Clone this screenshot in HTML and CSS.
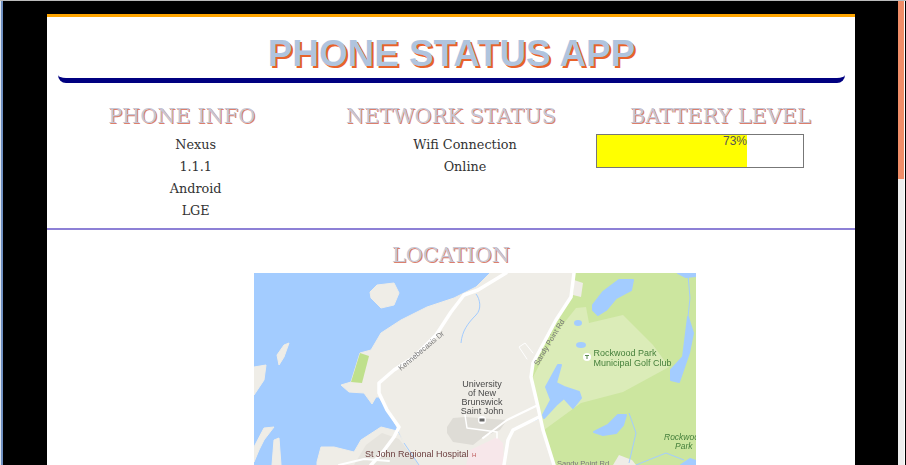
FILE: index.html
```html
<!DOCTYPE html>
<html lang="en">
<head>
<meta charset="utf-8">
<title>Phone Status App</title>
<link rel="stylesheet" href="styles.css">
</head>
<body>
<div class="desk">
  <main class="app">
    <header class="banner"><h1 class="title">PHONE STATUS APP</h1></header>
    <section class="status">
      <div class="col">
        <h2 class="heading">PHONE INFO</h2>
        <div class="lines"><p class="line">Nexus</p><p class="line">1.1.1</p><p class="line">Android</p><p class="line">LGE</p></div>
      </div>
      <div class="col">
        <h2 class="heading">NETWORK STATUS</h2>
        <div class="lines"><p class="line">Wifi Connection</p><p class="line">Online</p></div>
      </div>
      <div class="col">
        <h2 class="heading">BATTERY LEVEL</h2>
        <div class="meter"><div class="meter-fill" style="width:73%">73%</div></div>
      </div>
    </section>
    <section class="location">
      <h2 class="heading">LOCATION</h2>
      <div class="map">
        <svg class="map-svg" width="442" height="192" viewBox="0 0 442 192">
          <rect width="442" height="192" fill="#a3ccff"/>
          <g class="soft-land">
            <path d="M236 0L222 14L200 25L173 34L147 47L127 60L117 77L106 80L97 109L87 112L95 119L110 120L118 131L122 124L125 124L133 137L143 154L150 170L165 192H442V0Z"/>
            <path d="M143 158L127 154L107 167L100 179L80 174L67 174L63 189L63 192H170L150 170Z"/>
            <path d="M116 19L123 12L140 10L145 20L140 32L127 35L117 25Z"/>
            <path d="M35 70L30 72L23 82L25 92L30 84Z"/>
            <path d="M0 94L12 92L10 107L0 122Z"/>
            <path d="M0 174L10 155L20 154L10 167L5 177L0 189Z"/>
            <path d="M18 192L20 167L25 165L27 192Z"/>
          </g>
          <path fill="#e6e4de" d="M100 192L112 172L128 160L145 166L165 192Z"/>
          <path fill="#cce69f" d="M320 0H442V192H300L289 157L284 134L277 104L279 90L302 47L317 24Z"/>
          <path fill="#efede7" d="M320 7L329 10L327 24L319 22Z"/>
          <path fill="#dbecb8" d="M322 35L332 34L335 50L369 42L399 72L415 94L369 119L327 130L290 157L285 137L279 104L302 60Z"/>
          <path fill="#bfe08c" d="M106 80L115 83L108 110L97 109Z"/>
          <path fill="#efede7" d="M359 192L365 182L378 187L382 192Z"/>
          <path fill="#dedcd6" d="M193 154L199 145L211 144L253 147L246 157L229 164L219 172L199 169L193 160Z"/>
          <path fill="#f7e7ea" d="M216 177L233 169L243 164L249 170L250 192H212Z"/>
          <g class="soft-water">
            <path d="M339 32L349 19L365 7L379 7L377 17L362 25L352 37L344 42L339 37Z"/>
            <path d="M304 92L307 92L302 110L310 114L325 119L327 125L319 135L310 125L302 132L290 145L289 142L297 127L292 114Z"/>
            <path d="M340 159L354 152L364 142L372 142L369 152L362 160L349 162Z"/>
            <path d="M434 44L439 60L435 80L425 109L417 107L417 97L429 84Z"/>
            <path d="M424 0H442V3L432 4Z"/>
            <path d="M427 192L436 186L442 188V192Z"/>
            <ellipse cx="324" cy="50" rx="3" ry="2"/>
            <ellipse cx="327" cy="72" rx="4" ry="2"/>
          </g>
          <g fill="none" stroke="#a3ccff" stroke-width="1">
            <path d="M434 2L436 25L434 44"/>
            <path d="M375 140L382 160L375 190"/>
            <path d="M382 192L412 180L430 187"/>
            <path d="M259 156L274 150L284 146"/>
            <path d="M207 70C208 58 214 50 222 42C228 36 226 26 222 21"/>
            <path d="M150 170L165 192"/>
          </g>
          <g fill="none" stroke="#fff" stroke-linecap="round" stroke-linejoin="round">
            <path stroke-width="3.500" d="M252 0L224 17L210 22L197 39L182 62L160 84L140 97L125 110L125 120L133 137L145 154L140 164L128 180L117 192"/>
            <path stroke-width="3.500" d="M320 0L317 24L302 47L279 90L277 104L284 134L289 157L300 192"/>
            <path stroke-width="3.500" d="M285 144L259 157L254 167L250 192"/>
            <path stroke-width="2" d="M284 132L253 147L229 165"/>
            <path stroke-width="1.500" d="M211 142L213 155L243 159L243 165"/>
            <path stroke-width="2" d="M85 192L110 186L135 188"/>
            <path stroke-width="1" d="M279 80L271 70L265 74L273 86"/>
          </g>
          <circle cx="333" cy="84" r="4" fill="#fff"/>
          <path d="M331 82.500h4M333 82.500v3.500" stroke="#5c8a50" fill="none"/>
          <circle cx="228" cy="147" r="4" fill="#fff"/>
          <rect x="225.500" y="145.500" width="5" height="3" fill="#666"/>
          <g class="lbl-dark">
            <text x="228" y="114" text-anchor="middle">University</text>
            <text x="228" y="123" text-anchor="middle">of New</text>
            <text x="228" y="132" text-anchor="middle">Brunswick</text>
            <text x="228" y="141" text-anchor="middle">Saint John</text>
          </g>
          <text class="lbl-hospital" x="111" y="184">St John Regional Hospital</text>
          <text class="lbl-h" x="218" y="183.500">H</text>
          <g class="lbl-green"><text x="339.500" y="83">Rockwood Park</text><text x="339.500" y="93">Municipal Golf Club</text></g>
          <g class="lbl-park"><text x="410" y="167">Rockwood</text><text x="421" y="176">Park</text></g>
          <text class="lbl-road" transform="translate(147 98) rotate(-40)">Kennebecasis Dr</text>
          <text class="lbl-road" transform="translate(284 93) rotate(-59)">Sandy Point Rd</text>
          <text class="lbl-road" x="303" y="193">Sandy Point Rd</text>
        </svg>
      </div>
    </section>
  </main>
  <div class="track"><div class="thumb"></div></div>
</div>
</body>
</html>
```
FILE: styles.css
```css
html, body { margin: 0; padding: 0; height: 100%; overflow: hidden; background: #fff; }
.desk { height: 465px; box-sizing: border-box; display: flex; padding-left: 4px; background: #000; border-top: 1px solid #bbb; box-shadow: inset 1px 0 0 #dfe6f0, inset 3px 0 0 #6f8fc0; }
.app { width: 808px; margin: 13px 0 0 43px; background: #fff; border-top: 3px solid #ffa500; height: 451px; overflow: hidden; flex: none; }
.banner { margin: 0 10px 0 11px; padding: 19px 0 0; height: 42px; background: #fff; border-bottom: 5px solid #000080; border-radius: 0 0 8px 8px; text-align: center; }
.title { margin: 0; font: bold 36.800px/36px "Liberation Sans", Arial, sans-serif; color: #b0c4de; text-shadow: 2px 2px 0 #e9622a; }
.heading { margin: 0; font: normal 20.800px/27px "DejaVu Serif", serif; color: #c6c6d4; text-align: center; text-shadow: 1px 1px 0 #dc7f6c; }
.status { display: grid; grid-template-columns: repeat(3, 1fr); height: 145px; border-bottom: 2px solid #8d80d6; }
.col { text-align: center; padding-top: 20px; }
.lines { padding: 4px 0 0 28px; }
.line { margin: 0; font: 12.800px/22px "DejaVu Serif", serif; color: #333; }
.meter { width: 206px; height: 32px; border: 1px solid #777; margin: 4px 0 0 10px; }
.meter-fill { height: 100%; background: #ff0; font: 12px/12px "Liberation Sans", Arial, sans-serif; color: #555; text-align: right; }
.location { padding-top: 12px; }
.map { width: 442px; height: 192px; margin: 4px 0 0 207px; overflow: hidden; }
.map-svg { display: block; filter: blur(0.4px); }
.soft-land path { fill: #efede7; stroke: #efede7; stroke-width: 1; stroke-linejoin: round; }
.soft-water > * { fill: #a3ccff; stroke: #a3ccff; stroke-width: 2; stroke-linejoin: round; }
.lbl-dark text { font: 9px "Liberation Sans", Arial, sans-serif; fill: #4a4a4a; }
.lbl-hospital { font: 9px "Liberation Sans", Arial, sans-serif; fill: #6d4040; }
.lbl-h { font: 6px "Liberation Sans", Arial, sans-serif; fill: #b55; }
.lbl-green text { font: 9px "Liberation Sans", Arial, sans-serif; fill: #46803c; }
.lbl-park text { font: italic 8.500px "Liberation Sans", Arial, sans-serif; fill: #46803c; }
.lbl-road { font: 7.500px "Liberation Sans", Arial, sans-serif; fill: #777; }
.track { width: 6px; margin-left: 43px; background: #eee; border-right: 1px solid #fff; flex: none; }
.thumb { height: 178px; background: #f08d68; }
```
